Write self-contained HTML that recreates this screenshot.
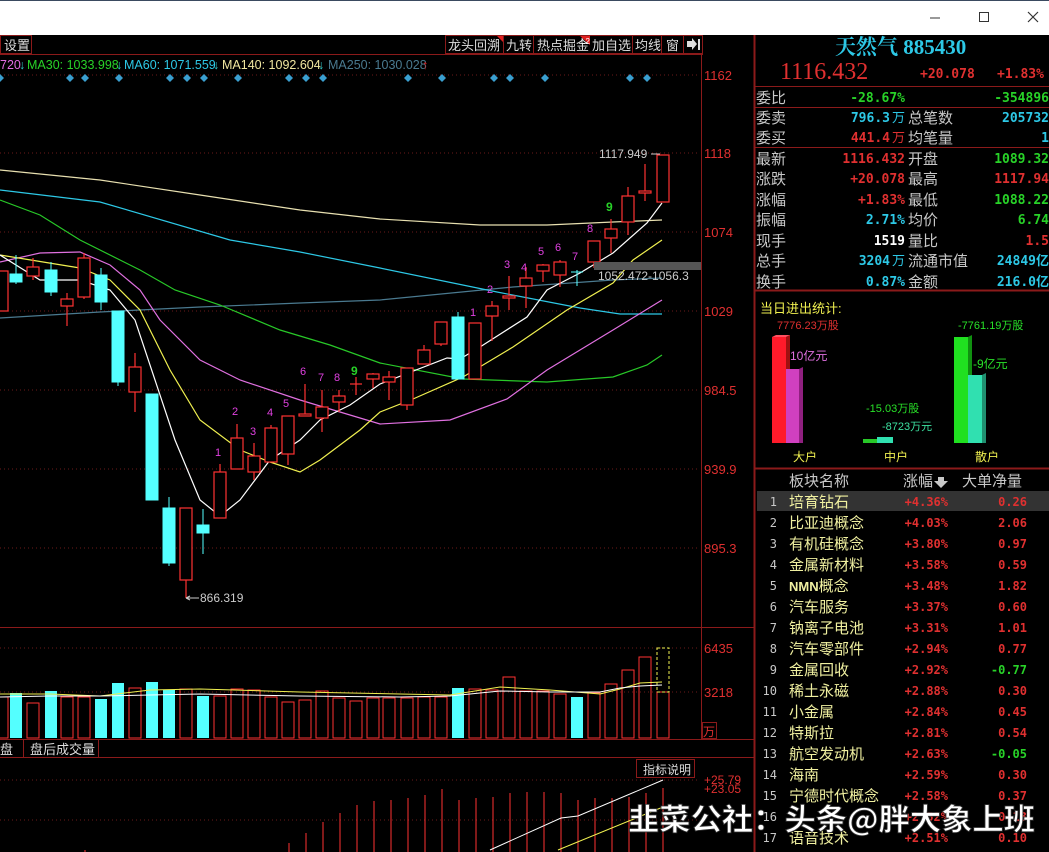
<!DOCTYPE html>
<html><head><meta charset="utf-8"><style>
html,body{margin:0;padding:0;background:#000;width:1049px;height:852px;overflow:hidden}
svg{display:block}
</style></head><body>
<svg width="1049" height="852" xmlns="http://www.w3.org/2000/svg" font-family="Liberation Sans, Noto Sans CJK SC, sans-serif">
<rect width="1049" height="852" fill="#000"/>
<rect x="0" y="0" width="1049" height="35" fill="#fff"/>
<rect x="0" y="0" width="1049" height="1" fill="#3a4a60"/>
<line x1="930" y1="18" x2="940" y2="18" stroke="#333"/>
<rect x="979.5" y="12.5" width="9" height="9" fill="none" stroke="#333"/>
<path d="M1028 12 L1038 22 M1038 12 L1028 22" stroke="#333" stroke-width="1.2"/>

<rect x="0.5" y="35.5" width="31" height="18" fill="none" stroke="#8b1a1a"/>
<text x="4" y="50" fill="#ddd" font-size="13">设置</text>
<g fill="#ddd" font-size="13">
<rect x="445.5" y="35.5" width="257" height="18" fill="none" stroke="#8b1a1a"/>
<text x="448" y="50">龙头回溯</text>
<path d="M497 36 L503 36 L503 42Z" fill="#e02020"/>
<line x1="503.5" y1="36" x2="503.5" y2="53" stroke="#8b1a1a"/>
<text x="506" y="50">九转</text>
<line x1="533.5" y1="36" x2="533.5" y2="53" stroke="#8b1a1a"/>
<text x="537" y="50">热点掘金</text>
<path d="M580 36 L590 36 L590 45Z" fill="#e02020"/>
<text x="581" y="44" font-size="8" fill="#fff">L2</text>
<text x="592" y="50">加自选</text>
<line x1="632.5" y1="36" x2="632.5" y2="53" stroke="#8b1a1a"/>
<text x="635" y="50">均线</text>
<line x1="661.5" y1="36" x2="661.5" y2="53" stroke="#8b1a1a"/>
<text x="666" y="50">窗</text>
<line x1="683.5" y1="36" x2="683.5" y2="53" stroke="#8b1a1a"/>
<path d="M687 41 L692 41 L692 38 L697 44 L692 50 L692 47 L687 47Z M698 39 L700 39 L700 50 L698 50Z" fill="#ddd"/>
</g>
<line x1="0" y1="54.5" x2="703" y2="54.5" stroke="#8b1a1a"/>
<g font-size="12.5" font-family="Liberation Sans Narrow, Liberation Sans, sans-serif">
<text x="0" y="69" fill="#e36de3">720</text><text x="19" y="69" fill="#3cc">↓</text>
<text x="27" y="69" fill="#28d228">MA30: 1033.998</text><text x="116" y="69" fill="#3cc">↓</text>
<text x="124" y="69" fill="#2dc8e6">MA60: 1071.559</text><text x="213" y="69" fill="#3cc">↓</text>
<text x="222" y="69" fill="#f0e6a0">MA140: 1092.604</text><text x="318" y="69" fill="#3cc">↓</text>
<text x="328" y="69" fill="#4a7a90">MA250: 1030.028</text><text x="422" y="69" fill="#e02020">↑</text>
</g>
<line x1="701.5" y1="54" x2="701.5" y2="740" stroke="#8b1a1a"/>
<line x1="754.5" y1="35" x2="754.5" y2="852" stroke="#8b1a1a" stroke-width="2"/>
<g stroke="#6b1a1a" stroke-dasharray="1,3">
<line x1="0" y1="75" x2="700" y2="75"/><line x1="0" y1="153" x2="700" y2="153"/><line x1="0" y1="232" x2="700" y2="232"/><line x1="0" y1="311" x2="700" y2="311"/><line x1="0" y1="390" x2="700" y2="390"/><line x1="0" y1="469" x2="700" y2="469"/><line x1="0" y1="548" x2="700" y2="548"/>
<line x1="0" y1="648" x2="700" y2="648"/><line x1="0" y1="692" x2="700" y2="692"/>
<line x1="0" y1="780" x2="700" y2="780"/><line x1="0" y1="820" x2="700" y2="820"/>
</g>
<g fill="#e03030" font-size="13" font-family="Liberation Sans Narrow, Liberation Sans, sans-serif">
<text x="704" y="80">1162</text><text x="704" y="158">1118</text><text x="704" y="237">1074</text><text x="704" y="316">1029</text><text x="704" y="395">984.5</text><text x="704" y="474">939.9</text><text x="704" y="553">895.3</text>
<text x="704" y="653">6435</text><text x="704" y="697">3218</text>
<text x="704" y="784" font-size="12">+25.79</text><text x="704" y="793" font-size="12">+23.05</text>
</g>
<rect x="702.5" y="722.5" width="14" height="16" fill="none" stroke="#8b1a1a"/>
<text x="703" y="736" fill="#e03030" font-size="12">万</text>
<g fill="#3a9fd0">
<path d="M0 74l4 4-4 4-4-4z M70 74l4 4-4 4-4-4z M85 74l4 4-4 4-4-4z M119 74l4 4-4 4-4-4z M170 74l4 4-4 4-4-4z M187 74l4 4-4 4-4-4z M204 74l4 4-4 4-4-4z M238 74l4 4-4 4-4-4z M289 74l4 4-4 4-4-4z M306 74l4 4-4 4-4-4z M323 74l4 4-4 4-4-4z M408 74l4 4-4 4-4-4z M442 74l4 4-4 4-4-4z M494 74l4 4-4 4-4-4z M510 74l4 4-4 4-4-4z M545 74l4 4-4 4-4-4z M630 74l4 4-4 4-4-4z M647 74l4 4-4 4-4-4z"/>
</g>
<g fill="none" stroke-width="1.2">
<polyline stroke="#e8e0b0" points="0,170 100,180 200,195 300,210 380,219 480,225 547,225 613,222 662,220"/>
<polyline stroke="#4a7a90" points="0,318 100,312 200,307 300,303 380,300 513,287 613,280 662,278"/>
<polyline stroke="#2dc8e6" points="0,190 100,202 230,240 300,252 380,268 497,292 580,308 620,314 662,314"/>
<polyline stroke="#28c828" points="0,200 40,215 80,240 140,270 175,290 220,305 280,330 330,345 380,363 463,379 547,382 613,377 647,365 662,355"/>
<polyline stroke="#e070e0" points="0,262 40,253 80,252 110,265 140,290 160,320 200,360 240,380 300,400 350,415 380,424 450,420 507,399 547,370 613,330 662,300"/>
<polyline stroke="#f0f050" points="0,255 80,268 110,280 140,310 170,370 200,420 240,450 270,462 300,472 320,460 360,430 380,412 413,399 463,377 513,347 567,310 613,283 633,260 662,240"/>
<polyline stroke="#ffffff" points="0,255 40,280 80,280 110,290 135,320 155,380 175,440 200,500 220,516 240,500 270,460 300,440 320,420 350,405 380,384 447,358 460,359 480,347 527,317 547,290 580,273 613,253 647,223 662,203"/>
</g>
<g stroke="#ff3232" fill="#000" stroke-width="1.2">
<line x1="2" y1="271" x2="2" y2="311"/><rect x="-4" y="271" width="12" height="40"/>
<line x1="33" y1="258" x2="33" y2="280"/><rect x="27" y="267" width="12" height="9"/>
<line x1="67" y1="293" x2="67" y2="326"/><rect x="61" y="299" width="12" height="7"/>
<line x1="84" y1="253" x2="84" y2="299"/><rect x="78" y="258" width="12" height="39"/>
<line x1="135" y1="353" x2="135" y2="412"/><rect x="129" y="367" width="12" height="25"/>
<line x1="186" y1="508" x2="186" y2="598"/><rect x="180" y="508" width="12" height="72"/>
<line x1="220" y1="464" x2="220" y2="518"/><rect x="214" y="472" width="12" height="46"/>
<line x1="237" y1="424" x2="237" y2="469"/><rect x="231" y="438" width="12" height="31"/>
<line x1="254" y1="443" x2="254" y2="480"/><rect x="248" y="456" width="12" height="16"/>
<line x1="271" y1="425" x2="271" y2="462"/><rect x="265" y="428" width="12" height="34"/>
<line x1="288" y1="416" x2="288" y2="465"/><rect x="282" y="416" width="12" height="38"/>
<line x1="305" y1="384" x2="305" y2="416"/><rect x="299" y="414" width="12" height="2"/>
<line x1="322" y1="390" x2="322" y2="432"/><rect x="316" y="407" width="12" height="11"/>
<line x1="339" y1="390" x2="339" y2="412"/><rect x="333" y="396" width="12" height="6"/>
<line x1="356" y1="377" x2="356" y2="395"/><line x1="350" y1="384" x2="362" y2="384"/>
<line x1="373" y1="373" x2="373" y2="388"/><rect x="367" y="374" width="12" height="5"/>
<line x1="389" y1="371" x2="389" y2="400"/><rect x="383" y="377" width="12" height="5"/>
<line x1="407" y1="368" x2="407" y2="410"/><rect x="401" y="368" width="12" height="37"/>
<line x1="424" y1="345" x2="424" y2="364"/><rect x="418" y="350" width="12" height="14"/>
<line x1="441" y1="322" x2="441" y2="346"/><rect x="435" y="322" width="12" height="22"/>
<rect x="469" y="323" width="12" height="56"/>
<line x1="492" y1="301" x2="492" y2="341"/><rect x="486" y="306" width="12" height="10"/>
<line x1="509" y1="276" x2="509" y2="310"/><rect x="503" y="296" width="12" height="2"/>
<line x1="526" y1="267" x2="526" y2="308"/><rect x="520" y="278" width="12" height="8"/>
<line x1="543" y1="264" x2="543" y2="282"/><rect x="537" y="265" width="12" height="6"/>
<line x1="560" y1="260" x2="560" y2="287"/><rect x="554" y="262" width="12" height="13"/>
<line x1="594" y1="241" x2="594" y2="268"/><rect x="588" y="241" width="12" height="21"/>
<line x1="611" y1="219" x2="611" y2="253"/><rect x="605" y="229" width="12" height="9"/>
<line x1="628" y1="187" x2="628" y2="235"/><rect x="622" y="196" width="12" height="26"/>
<line x1="645" y1="164" x2="645" y2="201"/><rect x="639" y="191" width="12" height="2"/>
<rect x="657" y="155" width="12" height="47"/>
</g>
<g fill="#54ffff" stroke="#54ffff">
<line x1="16" y1="255" x2="16" y2="284"/><rect x="10" y="274" width="12" height="8"/>
<line x1="51" y1="262" x2="51" y2="296"/><rect x="45" y="270" width="12" height="22"/>
<line x1="101" y1="268" x2="101" y2="310"/><rect x="95" y="275" width="12" height="27"/>
<line x1="118" y1="311" x2="118" y2="386"/><rect x="112" y="311" width="12" height="71"/>
<rect x="146" y="394" width="12" height="106"/>
<line x1="169" y1="497" x2="169" y2="566"/><rect x="163" y="508" width="12" height="55"/>
<line x1="203" y1="509" x2="203" y2="554"/><rect x="197" y="525" width="12" height="8"/>
<line x1="458" y1="312" x2="458" y2="379"/><rect x="452" y="317" width="12" height="62"/>
<line x1="577" y1="270" x2="577" y2="286"/><line x1="571" y1="272" x2="583" y2="272"/>
</g>
<g fill="#e040e0" font-size="11">
<text x="215" y="456">1</text><text x="232" y="415">2</text><text x="250" y="435">3</text><text x="267" y="416">4</text><text x="283" y="407">5</text><text x="300" y="375">6</text><text x="318" y="381">7</text><text x="334" y="381">8</text>
<text x="470" y="316">1</text><text x="487" y="293">2</text><text x="504" y="268">3</text><text x="521" y="271">4</text><text x="538" y="255">5</text><text x="555" y="251">6</text><text x="572" y="260">7</text><text x="587" y="232">8</text>
</g>
<text x="351" y="375" fill="#28d228" font-size="12" font-weight="bold">9</text>
<text x="606" y="211" fill="#28d228" font-size="12" font-weight="bold">9</text>
<text x="599" y="158" fill="#ccc" font-size="12">1117.949</text>
<path d="M651 154 L660 154" stroke="#ccc"/>
<text x="200" y="602" fill="#ccc" font-size="12">866.319</text>
<path d="M186 598 L199 598 M186 598 L190 596 M186 598 L190 600" stroke="#ccc"/>
<rect x="594" y="262" width="107" height="8" fill="#555"/>
<text x="598" y="280" fill="#ccc" font-size="12">1052.472-1056.3</text>

<line x1="0" y1="627.5" x2="754" y2="627.5" stroke="#8b1a1a"/>
<line x1="0" y1="739.5" x2="754" y2="739.5" stroke="#8b1a1a"/>
<line x1="0" y1="757.5" x2="754" y2="757.5" stroke="#8b1a1a"/>
<g fill="#54ffff">
<rect x="10" y="693" width="12" height="45"/><rect x="45" y="691" width="12" height="47"/><rect x="95" y="699" width="12" height="39"/><rect x="112" y="683" width="12" height="55"/><rect x="146" y="682" width="12" height="56"/><rect x="163" y="690" width="12" height="48"/><rect x="197" y="696" width="12" height="42"/><rect x="452" y="688" width="12" height="50"/><rect x="571" y="697" width="12" height="41"/>
</g>
<g fill="none" stroke="#ff3232">
<rect x="-4" y="697" width="12" height="41"/><rect x="27" y="703" width="12" height="35"/><rect x="61" y="697" width="12" height="41"/><rect x="78" y="697" width="12" height="41"/><rect x="129" y="688" width="12" height="50"/><rect x="180" y="689" width="12" height="49"/><rect x="214" y="696" width="12" height="42"/><rect x="231" y="689" width="12" height="49"/><rect x="248" y="690" width="12" height="48"/><rect x="265" y="697" width="12" height="41"/><rect x="282" y="702" width="12" height="36"/><rect x="299" y="700" width="12" height="38"/><rect x="316" y="691" width="12" height="47"/><rect x="333" y="698" width="12" height="40"/><rect x="350" y="701" width="12" height="37"/><rect x="367" y="698" width="12" height="40"/><rect x="383" y="698" width="12" height="40"/><rect x="401" y="698" width="12" height="40"/><rect x="418" y="697" width="12" height="41"/><rect x="435" y="697" width="12" height="41"/><rect x="469" y="689" width="12" height="49"/><rect x="486" y="690" width="12" height="48"/><rect x="503" y="677" width="12" height="61"/><rect x="520" y="691" width="12" height="47"/><rect x="537" y="691" width="12" height="47"/><rect x="554" y="694" width="12" height="44"/><rect x="588" y="693" width="12" height="45"/><rect x="605" y="684" width="12" height="54"/><rect x="622" y="670" width="12" height="68"/><rect x="639" y="657" width="12" height="81"/><rect x="657" y="692" width="12" height="46"/>
</g>
<rect x="657" y="648" width="12" height="44" fill="none" stroke="#f0f050" stroke-dasharray="3,2"/>
<polyline fill="none" stroke="#f0f050" points="0,694 50,694 100,696 150,690 200,689 300,692 400,694 450,695 500,687 550,690 600,694 620,689 640,683 662,682"/>
<polyline fill="none" stroke="#fff" points="0,697 50,696 100,696 150,695 200,694 300,696 400,697 450,696 500,691 550,692 600,692 620,688 640,686 662,685"/>
<line x1="23.5" y1="740" x2="23.5" y2="757" stroke="#8b1a1a"/>
<line x1="98.5" y1="740" x2="98.5" y2="757" stroke="#8b1a1a"/>
<text x="0" y="754" fill="#ddd" font-size="13">盘</text>
<text x="30" y="754" fill="#ddd" font-size="13">盘后成交量</text>
<rect x="636.5" y="759.5" width="58" height="18" fill="#000" stroke="#8b1a1a"/>
<text x="643" y="774" fill="#ddd" font-size="12">指标说明</text>
<g stroke="#ff3232">
<line x1="85" y1="852" x2="85" y2="850"/><line x1="289" y1="852" x2="289" y2="843"/><line x1="306" y1="852" x2="306" y2="833"/><line x1="323" y1="852" x2="323" y2="822"/><line x1="340" y1="852" x2="340" y2="813"/><line x1="357" y1="852" x2="357" y2="805"/><line x1="374" y1="852" x2="374" y2="801"/><line x1="391" y1="852" x2="391" y2="800"/><line x1="408" y1="852" x2="408" y2="798"/><line x1="425" y1="852" x2="425" y2="795"/><line x1="442" y1="852" x2="442" y2="789"/><line x1="459" y1="852" x2="459" y2="800"/><line x1="476" y1="852" x2="476" y2="798"/><line x1="493" y1="852" x2="493" y2="797"/><line x1="510" y1="852" x2="510" y2="793"/><line x1="527" y1="852" x2="527" y2="792"/><line x1="544" y1="852" x2="544" y2="792"/><line x1="561" y1="852" x2="561" y2="793"/><line x1="578" y1="852" x2="578" y2="800"/><line x1="595" y1="852" x2="595" y2="798"/><line x1="612" y1="852" x2="612" y2="798"/><line x1="629" y1="852" x2="629" y2="797"/><line x1="646" y1="852" x2="646" y2="793"/><line x1="663" y1="852" x2="663" y2="788"/>
</g>
<polyline fill="none" stroke="#fff" points="490,850 561,818 578,816 663,780"/>
<polyline fill="none" stroke="#f0f050" points="558,850 663,807"/>

<text x="835" y="54" fill="#2dc8e6" font-size="21" font-weight="bold" font-family="Liberation Serif, Noto Serif CJK SC, serif">天然气 885430</text>
<text x="780" y="79" fill="#e03030" font-size="24" font-family="Liberation Serif, serif">1116.432</text>
<g fill="#e03030" font-size="13" font-weight="bold" font-family="DejaVu Sans Mono, monospace">
<text x="920" y="78">+20.078</text><text x="997" y="78">+1.83%</text>
</g>
<g stroke="#8b1a1a"><line x1="755" y1="86.5" x2="1049" y2="86.5"/><line x1="755" y1="107.5" x2="1049" y2="107.5"/><line x1="755" y1="147.5" x2="1049" y2="147.5"/><line x1="755" y1="290.5" x2="1049" y2="290.5" stroke-width="2"/><line x1="755" y1="468.5" x2="1049" y2="468.5" stroke-width="2"/></g>
<g fill="#c8c8c8" font-size="15">
<text x="756" y="103">委比</text><text x="756" y="123">委卖</text><text x="756" y="143">委买</text><text x="756" y="164">最新</text><text x="756" y="184">涨跌</text><text x="756" y="205">涨幅</text><text x="756" y="225">振幅</text><text x="756" y="246">现手</text><text x="756" y="266">总手</text><text x="756" y="287">换手</text>
<text x="908" y="123">总笔数</text><text x="908" y="143">均笔量</text><text x="908" y="164">开盘</text><text x="908" y="184">最高</text><text x="908" y="205">最低</text><text x="908" y="225">均价</text><text x="908" y="246">量比</text><text x="908" y="266">流通市值</text><text x="908" y="287">金额</text>
</g>
<g font-size="13" font-weight="bold" font-family="DejaVu Sans Mono, Noto Sans CJK SC, monospace" text-anchor="end">
<text x="905" y="102" fill="#28d228">-28.67%</text><text x="1049" y="102" fill="#28d228">-354896</text>
<text x="890" y="122" fill="#2dc8e6">796.3</text><text x="905" y="122" fill="#2dc8e6" font-weight="normal">万</text><text x="1049" y="122" fill="#2dc8e6">205732</text>
<text x="890" y="142" fill="#e03030">441.4</text><text x="905" y="142" fill="#e03030" font-weight="normal">万</text><text x="1049" y="142" fill="#2dc8e6">1</text>
<text x="905" y="163" fill="#e03030">1116.432</text><text x="1049" y="163" fill="#28d228">1089.32</text>
<text x="905" y="183" fill="#e03030">+20.078</text><text x="1049" y="183" fill="#e03030">1117.94</text>
<text x="905" y="204" fill="#e03030">+1.83%</text><text x="1049" y="204" fill="#28d228">1088.22</text>
<text x="905" y="224" fill="#2dc8e6">2.71%</text><text x="1049" y="224" fill="#28d228">6.74</text>
<text x="905" y="245" fill="#fff">1519</text><text x="1049" y="245" fill="#e03030">1.5</text>
<text x="890" y="265" fill="#2dc8e6">3204</text><text x="905" y="265" fill="#2dc8e6" font-weight="normal">万</text><text x="1049" y="265" fill="#2dc8e6">24849亿</text>
<text x="905" y="286" fill="#2dc8e6">0.87%</text><text x="1049" y="286" fill="#2dc8e6">216.0亿</text>
</g>
<text x="760" y="313" fill="#f0f050" font-size="13">当日进出统计:</text>
<text x="777" y="329" fill="#e03030" font-size="11">7776.23万股</text>
<rect x="772" y="337" width="14" height="106" fill="#ff1a2a"/><path d="M786 337 L790 335 L790 443 L786 443Z" fill="#a01010"/><path d="M772 337 L776 335 L790 335 L786 337Z" fill="#ff5060"/>
<text x="790" y="360" fill="#e070e0" font-size="12">10亿元</text>
<rect x="786" y="369" width="13" height="74" fill="#d040c0"/><path d="M799 369 L803 367 L803 443 L799 443Z" fill="#902080"/>
<text x="866" y="412" fill="#28e028" font-size="11">-15.03万股</text>
<text x="882" y="430" fill="#3ce0a0" font-size="11">-8723万元</text>
<rect x="863" y="439" width="14" height="4" fill="#28c828"/><rect x="877" y="437" width="16" height="6" fill="#30e0b0"/>
<text x="958" y="329" fill="#28e028" font-size="11">-7761.19万股</text>
<rect x="954" y="337" width="14" height="106" fill="#20e020"/><path d="M968 337 L972 335 L972 443 L968 443Z" fill="#109010"/>
<text x="973" y="368" fill="#28e028" font-size="12">-9亿元</text>
<rect x="968" y="375" width="14" height="68" fill="#30e0b0"/><path d="M982 375 L986 373 L986 443 L982 443Z" fill="#209070"/>
<g fill="#f0f050" font-size="12"><text x="793" y="461">大户</text><text x="884" y="461">中户</text><text x="975" y="461">散户</text></g>
<g fill="#c8c8c8" font-size="15"><text x="789" y="486">板块名称</text><text x="903" y="486">涨幅</text><text x="962" y="486">大单净量</text></g>
<path d="M938 477 L944 477 L944 481 L948 481 L941 488 L934 481 L938 481Z" fill="#c8c8c8"/>
<rect x="757" y="491" width="292" height="20" fill="#333"/>
<g font-size="14">
<g fill="#c8c8c8" text-anchor="end" font-family="DejaVu Sans Mono, monospace" font-size="12">
<text x="777" y="506">1</text><text x="777" y="527">2</text><text x="777" y="548">3</text><text x="777" y="569">4</text><text x="777" y="590">5</text><text x="777" y="611">6</text><text x="777" y="632">7</text><text x="777" y="653">8</text><text x="777" y="674">9</text><text x="777" y="695">10</text><text x="777" y="716">11</text><text x="777" y="737">12</text><text x="777" y="758">13</text><text x="777" y="779">14</text><text x="777" y="800">15</text><text x="777" y="821">16</text><text x="777" y="842">17</text>
</g>
<g fill="#f0f0a0" font-size="15">
<text x="789" y="507">培育钻石</text><text x="789" y="528">比亚迪概念</text><text x="789" y="549">有机硅概念</text><text x="789" y="570">金属新材料</text><text x="789" y="591"><tspan font-weight="bold" font-size="13">NMN</tspan>概念</text><text x="789" y="612">汽车服务</text><text x="789" y="633">钠离子电池</text><text x="789" y="654">汽车零部件</text><text x="789" y="675">金属回收</text><text x="789" y="696">稀土永磁</text><text x="789" y="717">小金属</text><text x="789" y="738">特斯拉</text><text x="789" y="759">航空发动机</text><text x="789" y="780">海南</text><text x="789" y="801">宁德时代概念</text><text x="789" y="843">语音技术</text>
</g>
<g fill="#e03030" font-weight="bold" font-size="12" font-family="DejaVu Sans Mono, monospace" text-anchor="end">
<text x="948" y="506">+4.36%</text><text x="948" y="527">+4.03%</text><text x="948" y="548">+3.80%</text><text x="948" y="569">+3.58%</text><text x="948" y="590">+3.48%</text><text x="948" y="611">+3.37%</text><text x="948" y="632">+3.31%</text><text x="948" y="653">+2.94%</text><text x="948" y="674">+2.92%</text><text x="948" y="695">+2.88%</text><text x="948" y="716">+2.84%</text><text x="948" y="737">+2.81%</text><text x="948" y="758">+2.63%</text><text x="948" y="779">+2.59%</text><text x="948" y="800">+2.58%</text><text x="948" y="821">+2.52%</text><text x="948" y="842">+2.51%</text>
<text x="1027" y="506">0.26</text><text x="1027" y="527">2.06</text><text x="1027" y="548">0.97</text><text x="1027" y="569">0.59</text><text x="1027" y="590">1.82</text><text x="1027" y="611">0.60</text><text x="1027" y="632">1.01</text><text x="1027" y="653">0.77</text><text x="1027" y="674" fill="#28d228">-0.77</text><text x="1027" y="695">0.30</text><text x="1027" y="716">0.45</text><text x="1027" y="737">0.54</text><text x="1027" y="758" fill="#28d228">-0.05</text><text x="1027" y="779">0.30</text><text x="1027" y="800">0.37</text><text x="1027" y="821">0.13</text><text x="1027" y="842">0.10</text>
</g>
</g>
<text x="628" y="830" fill="#fff" stroke="#333" stroke-width="0.8" font-size="30" font-weight="bold" textLength="407" lengthAdjust="spacingAndGlyphs" font-family="Noto Sans CJK SC, sans-serif">韭菜公社：头条@胖大象上班</text>
</svg>
</body></html>
